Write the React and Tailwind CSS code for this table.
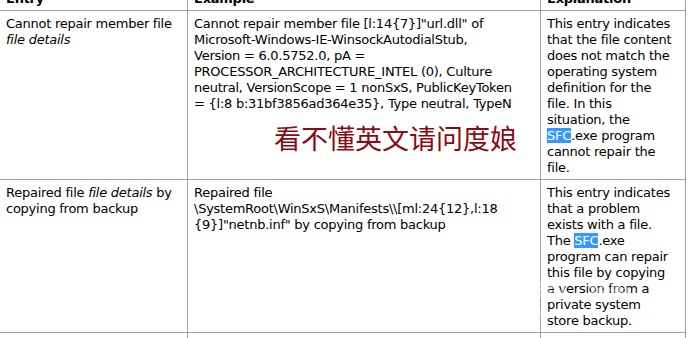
import React from 'react';

const cell = 'border border-[#a0a0a0] align-top px-[6px] pt-[5px] overflow-hidden';

const Hl = ({ children }) => (
  <span className="bg-[#3399ff] text-white">{children}</span>
);

const Lines = ({ lines }) => (
  <div>
    {lines.map((l, i) => (
      <div key={i} className="whitespace-nowrap h-4">{l}</div>
    ))}
  </div>
);

export default function App() {
  return (
    <div className="relative w-[692px] h-[338px] overflow-hidden bg-white text-black font-['DejaVu_Sans',Verdana,sans-serif] text-[13px] leading-4 tracking-[-0.25px]">
      <table className="table-fixed border-collapse ml-[-1px] mt-[-15px]">
        <colgroup>
          <col className="w-[188px]" />
          <col className="w-[353px]" />
          <col className="w-[145px]" />
        </colgroup>
        <tbody>
          <tr className="h-[25px] font-bold">
            <td className={cell}>Entry</td>
            <td className={cell}>Example</td>
            <td className={cell}>Explanation</td>
          </tr>
          <tr className="h-[169px]">
            <td className={cell}>
              <Lines lines={['Cannot repair member file', <i>file details</i>]} />
            </td>
            <td className={cell}>
              <Lines
                lines={[
                  'Cannot repair member file [l:14{7}]"url.dll" of',
                  'Microsoft-Windows-IE-WinsockAutodialStub,',
                  'Version = 6.0.5752.0, pA =',
                  'PROCESSOR_ARCHITECTURE_INTEL (0), Culture',
                  'neutral, VersionScope = 1 nonSxS, PublicKeyToken',
                  '= {l:8 b:31bf3856ad364e35}, Type neutral, TypeN',
                ]}
              />
            </td>
            <td className={cell}>
              <Lines
                lines={[
                  'This entry indicates',
                  'that the file content',
                  'does not match the',
                  'operating system',
                  'definition for the',
                  'file. In this',
                  'situation, the',
                  <><Hl>SFC</Hl>.exe program</>,
                  'cannot repair the',
                  'file.',
                ]}
              />
            </td>
          </tr>
          <tr className="h-[153px]">
            <td className={cell}>
              <Lines lines={[<>Repaired file <i>file details</i> by</>, 'copying from backup']} />
            </td>
            <td className={cell}>
              <Lines
                lines={[
                  'Repaired file',
                  '\\SystemRoot\\WinSxS\\Manifests\\\\[ml:24{12},l:18',
                  '{9}]"netnb.inf" by copying from backup',
                ]}
              />
            </td>
            <td className={cell}>
              <Lines
                lines={[
                  'This entry indicates',
                  'that a problem',
                  'exists with a file.',
                  <>The <Hl>SFC</Hl>.exe</>,
                  'program can repair',
                  'this file by copying',
                  'a version from a',
                  'private system',
                  'store backup.',
                ]}
              />
            </td>
          </tr>
          <tr className="h-[40px]">
            <td className={cell}></td>
            <td className={cell}></td>
            <td className={cell}></td>
          </tr>
        </tbody>
      </table>

      <div className="absolute left-[274px] top-[121px] text-[27px] leading-[34px] tracking-normal text-[#8a0a14] font-['Noto_Sans_CJK_SC',sans-serif]">
        看不懂英文请问度娘
      </div>

      <div className="absolute left-[532px] top-[280px] text-white/50 font-['DejaVu_Sans',sans-serif] leading-none tracking-normal">
        <div className="text-[20px] font-bold tracking-tight">Bai<span className="ml-6">经验</span></div>
        <div className="text-[13px] mt-[6px]">jingyan.baidu.com</div>
      </div>
    </div>
  );
}
